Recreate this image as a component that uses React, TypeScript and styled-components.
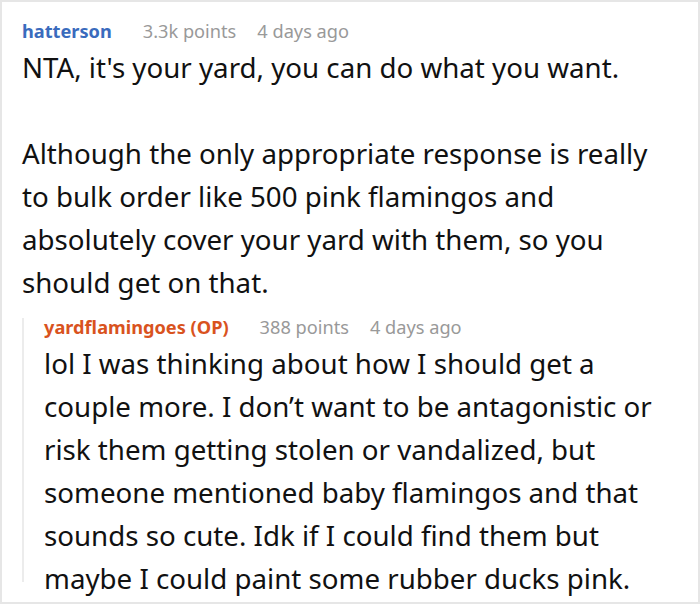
import React from "react";
import styled, { createGlobalStyle } from "styled-components";

const Global = createGlobalStyle`
  html, body { margin: 0; padding: 0; background: #fff; }
  body { font-family: "Noto Sans", "Open Sans", sans-serif; }
`;

const Frame = styled.div`
  box-sizing: border-box;
  width: 700px;
  height: 604px;
  border: 2px solid #e6e6e6;
  padding: 14px 20px 0 20px;
  overflow: hidden;
  background: #fff;
`;

const Comment = styled.div`
  display: flex;
  flex-direction: column;
`;

const Meta = styled.div`
  display: flex;
  align-items: baseline;
  gap: 21px;
  font-size: 18.2px;
  line-height: 30px;
`;

const User = styled.span<{ $op?: boolean }>`
  font-weight: 700;
  color: ${(p) => (p.$op ? "#d9531e" : "#3a6bbd")};
  margin-right: 10px;
`;

const Info = styled.span`
  color: #999;
`;

const Body = styled.div`
  font-size: 27.7px;
  line-height: 43px;
  color: #111;
  p { margin: 0; }
  p + p { margin-top: 43px; }
`;

const Reply = styled.div`
  position: relative;
  margin-top: 8px;
  padding-left: 22px;
  &::before {
    content: "";
    position: absolute;
    left: 0;
    top: 6px;
    bottom: 18px;
    width: 2px;
    background: #ececec;
  }
`;

export default function App() {
  return (
    <>
      <Global />
      <Frame>
        <Comment>
          <Meta>
            <User>hatterson</User>
            <Info>3.3k points</Info>
            <Info>4 days ago</Info>
          </Meta>
          <Body>
            <p>NTA, it's your yard, you can do what you want.</p>
            <p>
              Although the only appropriate response is really
              <br />
              to bulk order like 500 pink flamingos and
              <br />
              absolutely cover your yard with them, so you
              <br />
              should get on that.
            </p>
          </Body>
        </Comment>
        <Reply>
          <Comment>
            <Meta>
              <User $op>yardflamingoes (OP)</User>
              <Info>388 points</Info>
              <Info>4 days ago</Info>
            </Meta>
            <Body>
              lol I was thinking about how I should get a
              <br />
              couple more. I don’t want to be antagonistic or
              <br />
              risk them getting stolen or vandalized, but
              <br />
              someone mentioned baby flamingos and that
              <br />
              sounds so cute. Idk if I could find them but
              <br />
              maybe I could paint some rubber ducks pink.
            </Body>
          </Comment>
        </Reply>
      </Frame>
    </>
  );
}
